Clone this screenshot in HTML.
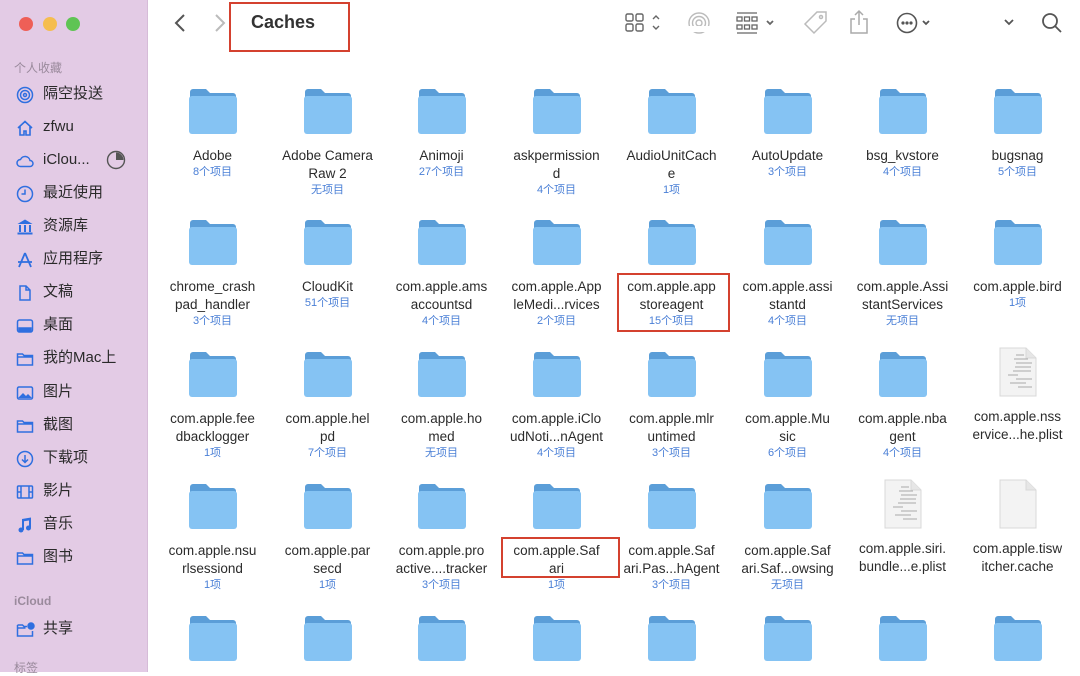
<!DOCTYPE html>
<html><head><meta charset="utf-8"><style>
*{margin:0;padding:0;box-sizing:border-box}
body{width:1080px;height:672px;overflow:hidden;background:#fff;font-family:"Liberation Sans","Noto Sans CJK SC",sans-serif;position:relative}
#sb{position:absolute;left:0;top:0;width:148px;height:672px;background:#e3cbe5;border-right:1px solid #d6bcd8}
.dot{position:absolute;top:17px;width:14px;height:14px;border-radius:50%}
.sh{position:absolute;left:14px;font-size:12px;color:#9a8a9c}
.si{position:absolute;left:16px;font-size:15px;color:#2a2a2a;height:20px;line-height:20px;white-space:nowrap}
.si svg{position:absolute;left:0;top:2px}
.si span{position:absolute;left:27px}
.c{position:absolute;width:115px;text-align:center}
.c svg{display:block;margin:0 auto}
.n{font-size:13.5px;color:#2b2b2b;line-height:18px;margin-top:12px}
.k{font-size:11px;color:#4a7fd6;line-height:15px}
.red{position:absolute;border:2px solid #d4412f}
.ti{position:absolute;color:#777}
</style></head><body>
<div id="sb">
<div class="dot" style="left:19px;background:#ee5f57"></div>
<div class="dot" style="left:43px;background:#f5bd4f"></div>
<div class="dot" style="left:66px;background:#5fc454"></div>
<div class="sh" style="top:59px">个人收藏</div>
<div class="si" style="top:84px"><svg width="18" height="18" viewBox="0 0 18 18" fill="none" stroke="#2f6fe0" stroke-width="1.5"><circle cx="9" cy="9" r="7.5"/><circle cx="9" cy="9" r="4.5"/><circle cx="9" cy="9" r="1.5"/></svg><span>隔空投送</span></div>
<div class="si" style="top:117px"><svg width="18" height="18" viewBox="0 0 18 18" fill="none" stroke="#2f6fe0" stroke-width="1.6"><path d="M2 9L9 2.5 16 9M4 7.5V16h4v-4h2v4h4V7.5"/></svg><span>zfwu</span></div>
<div class="si" style="top:150px"><svg width="18" height="18" viewBox="0 0 18 18" fill="none" stroke="#2f6fe0" stroke-width="1.5"><path d="M4.5 14.5a3.5 3.5 0 010-7 5 5 0 019.5 1 3 3 0 010 6z"/></svg><span>iClou...</span></div>
<svg style="position:absolute;left:106px;top:150px" width="20" height="20" viewBox="0 0 20 20"><circle cx="10" cy="10" r="8.5" fill="none" stroke="#555" stroke-width="1.4"/><path d="M10 10V2.5A7.5 7.5 0 0117.5 10z" fill="#555"/></svg>
<div class="si" style="top:183px"><svg width="18" height="18" viewBox="0 0 18 18" fill="none" stroke="#2f6fe0" stroke-width="1.5"><circle cx="9" cy="9" r="7.5"/><path d="M9 4.5V9H5.5"/></svg><span>最近使用</span></div>
<div class="si" style="top:216px"><svg width="18" height="18" viewBox="0 0 18 18" fill="#2f6fe0"><path d="M9 1.5L1.5 6h15z"/><rect x="3" y="7" width="2" height="7"/><rect x="8" y="7" width="2" height="7"/><rect x="13" y="7" width="2" height="7"/><rect x="1.5" y="14.5" width="15" height="2"/></svg><span>资源库</span></div>
<div class="si" style="top:249px"><svg width="18" height="18" viewBox="0 0 18 18" fill="none" stroke="#2f6fe0" stroke-width="1.8"><path d="M9 2L3 16M9 2l6 14M2 11h14"/></svg><span>应用程序</span></div>
<div class="si" style="top:282px"><svg width="18" height="18" viewBox="0 0 18 18" fill="none" stroke="#2f6fe0" stroke-width="1.5"><path d="M4 2h6l4 4v10H4zM10 2v4h4"/></svg><span>文稿</span></div>
<div class="si" style="top:315px"><svg width="18" height="18" viewBox="0 0 18 18" fill="none" stroke="#2f6fe0" stroke-width="1.5"><rect x="1.5" y="3" width="15" height="12" rx="2"/><rect x="3" y="11" width="12" height="3" fill="#2f6fe0"/></svg><span>桌面</span></div>
<div class="si" style="top:348px"><svg width="18" height="18" viewBox="0 0 18 18" fill="none" stroke="#2f6fe0" stroke-width="1.5"><path d="M1.5 4h5l1.5 1.5h8.5V15h-15zM1.5 7h15"/></svg><span>我的Mac上</span></div>
<div class="si" style="top:382px"><svg width="18" height="18" viewBox="0 0 18 18"><rect x="1.5" y="3" width="15" height="12" rx="1.5" fill="none" stroke="#2f6fe0" stroke-width="1.5"/><path d="M2 14l5-5 3 3 2-2 4 4z" fill="#2f6fe0"/></svg><span>图片</span></div>
<div class="si" style="top:415px"><svg width="18" height="18" viewBox="0 0 18 18" fill="none" stroke="#2f6fe0" stroke-width="1.5"><path d="M1.5 4h5l1.5 1.5h8.5V15h-15zM1.5 7h15"/></svg><span>截图</span></div>
<div class="si" style="top:448px"><svg width="18" height="18" viewBox="0 0 18 18" fill="none" stroke="#2f6fe0" stroke-width="1.5"><circle cx="9" cy="9" r="7.5"/><path d="M9 5v7M6 9.5l3 3 3-3"/></svg><span>下载项</span></div>
<div class="si" style="top:481px"><svg width="18" height="18" viewBox="0 0 18 18" fill="none" stroke="#2f6fe0" stroke-width="1.5"><rect x="1.5" y="3" width="15" height="12" rx="1"/><path d="M5 3v12M13 3v12M1.5 9h3.5M13 9h3.5"/></svg><span>影片</span></div>
<div class="si" style="top:514px"><svg width="18" height="18" viewBox="0 0 18 18" fill="#2f6fe0"><path d="M6 3l9-1.5v10h-2V4.5L8 5.3V14H6z"/><circle cx="5" cy="14" r="2.5"/><circle cx="12.5" cy="12" r="2.5"/></svg><span>音乐</span></div>
<div class="si" style="top:547px"><svg width="18" height="18" viewBox="0 0 18 18" fill="none" stroke="#2f6fe0" stroke-width="1.5"><path d="M1.5 4h5l1.5 1.5h8.5V15h-15zM1.5 7h15"/></svg><span>图书</span></div>
<div class="sh" style="top:594px;font-weight:bold">iCloud</div>
<div class="si" style="top:619px"><svg width="20" height="18" viewBox="0 0 20 18" fill="none" stroke="#2f6fe0" stroke-width="1.5"><path d="M1.5 4h5l1.5 1.5h3M16.5 10V15h-15V4M1.5 7h8"/><circle cx="15" cy="5" r="3" fill="#2f6fe0"/></svg><span>共享</span></div>
<div class="sh" style="top:659px">标签</div>
</div>

<svg class="ti" style="left:172px;top:12px" width="16" height="22" viewBox="0 0 16 22" fill="none" stroke="#555" stroke-width="2"><path d="M12 3L4 11l8 8"/></svg>
<svg class="ti" style="left:212px;top:12px" width="16" height="22" viewBox="0 0 16 22" fill="none" stroke="#bbb" stroke-width="2"><path d="M4 3l8 8-8 8"/></svg>
<div style="position:absolute;left:251px;top:12px;font-size:18px;font-weight:bold;color:#333">Caches</div>
<div class="red" style="left:229px;top:2px;width:121px;height:50px"></div>

<svg style="position:absolute;left:625px;top:12px" width="40" height="22" viewBox="0 0 40 22" fill="none" stroke="#666" stroke-width="1.4"><rect x="1" y="2" width="7" height="7" rx="1.5"/><rect x="11" y="2" width="7" height="7" rx="1.5"/><rect x="1" y="12" width="7" height="7" rx="1.5"/><rect x="11" y="12" width="7" height="7" rx="1.5"/><path d="M28 7l3-3 3 3M28 14l3 3 3-3"/></svg>
<svg style="position:absolute;left:687px;top:11px" width="24" height="24" viewBox="0 0 24 24" fill="none" stroke="#bbb" stroke-width="1.4"><circle cx="12" cy="12" r="10"/><circle cx="12" cy="12" r="6.5"/><circle cx="12" cy="12" r="3"/><path d="M0 18h24" stroke="#fff" stroke-width="6"/></svg>
<svg style="position:absolute;left:736px;top:11px" width="44" height="24" viewBox="0 0 44 24" fill="none" stroke="#666" stroke-width="1.3"><path d="M1 2h20M1 22h20"/><rect x="1" y="6" width="5" height="4"/><rect x="8.5" y="6" width="5" height="4"/><rect x="16" y="6" width="5" height="4"/><rect x="1" y="14" width="5" height="4"/><rect x="8.5" y="14" width="5" height="4"/><rect x="16" y="14" width="5" height="4"/><path d="M31 10l3 3 3-3" stroke-width="1.8"/></svg>
<svg style="position:absolute;left:803px;top:10px" width="26" height="26" viewBox="0 0 26 26" fill="none" stroke="#bbb" stroke-width="1.5"><path d="M14 2h9v9L11 23 2 14z"/><circle cx="18" cy="7" r="1.5"/></svg>
<svg style="position:absolute;left:849px;top:9px" width="20" height="26" viewBox="0 0 20 26" fill="none" stroke="#aaa" stroke-width="1.5"><path d="M10 2v14M6 6l4-4 4 4M6 10H2v14h16V10h-4"/></svg>
<svg style="position:absolute;left:896px;top:11px" width="44" height="24" viewBox="0 0 44 24" fill="none" stroke="#555" stroke-width="1.6"><circle cx="11" cy="12" r="9.5"/><circle cx="7" cy="12" r=".8" fill="#555"/><circle cx="11" cy="12" r=".8" fill="#555"/><circle cx="15" cy="12" r=".8" fill="#555"/><path d="M27 10l3 3 3-3" stroke-width="1.8"/></svg>
<svg style="position:absolute;left:1003px;top:17px" width="12" height="10" viewBox="0 0 12 10" fill="none" stroke="#555" stroke-width="1.8"><path d="M2 3l4 4 4-4"/></svg>
<svg style="position:absolute;left:1040px;top:11px" width="24" height="24" viewBox="0 0 24 24" fill="none" stroke="#555" stroke-width="1.8"><circle cx="10" cy="10" r="7"/><path d="M15 15l6 6"/></svg>

<svg width="0" height="0" style="position:absolute"><defs>
<symbol id="f" viewBox="0 0 50 48"><path d="M2 5a3 3 0 013-3h13l4 4h23a3 3 0 013 3v6H2z" fill="#5b9ed8"/><rect x="1" y="9" width="48" height="38" rx="3" fill="#85c3f3"/></symbol>
<symbol id="d" viewBox="0 0 40 50"><path d="M2 1h26l10 10v38H2z" fill="#f3f3f3" stroke="#d8d8d8"/><path d="M28 1v10h10" fill="#e6e6e6" stroke="#d8d8d8"/></symbol>
<symbol id="p" viewBox="0 0 40 50"><path d="M2 1h26l10 10v38H2z" fill="#f3f3f3" stroke="#d8d8d8"/><path d="M28 1v10h10" fill="#e6e6e6" stroke="#d8d8d8"/><g stroke="#aaa" stroke-width="1"><path d="M18 8h8M16 12h14M18 16h16M17 20h16M15 24h18M10 28h10M18 32h16M12 36h16M20 40h14"/></g></symbol>
</defs></svg>

<!-- row 1 -->
<div class="c" style="left:155px;top:87px"><svg width="50" height="48"><use href="#f"/></svg><div class="n">Adobe</div><div class="k">8个项目</div></div>
<div class="c" style="left:270px;top:87px"><svg width="50" height="48"><use href="#f"/></svg><div class="n">Adobe Camera<br>Raw 2</div><div class="k">无项目</div></div>
<div class="c" style="left:384px;top:87px"><svg width="50" height="48"><use href="#f"/></svg><div class="n">Animoji</div><div class="k">27个项目</div></div>
<div class="c" style="left:499px;top:87px"><svg width="50" height="48"><use href="#f"/></svg><div class="n">askpermission<br>d</div><div class="k">4个项目</div></div>
<div class="c" style="left:614px;top:87px"><svg width="50" height="48"><use href="#f"/></svg><div class="n">AudioUnitCach<br>e</div><div class="k">1项</div></div>
<div class="c" style="left:730px;top:87px"><svg width="50" height="48"><use href="#f"/></svg><div class="n">AutoUpdate</div><div class="k">3个项目</div></div>
<div class="c" style="left:845px;top:87px"><svg width="50" height="48"><use href="#f"/></svg><div class="n">bsg_kvstore</div><div class="k">4个项目</div></div>
<div class="c" style="left:960px;top:87px"><svg width="50" height="48"><use href="#f"/></svg><div class="n">bugsnag</div><div class="k">5个项目</div></div>
<!-- row 2 -->
<div class="c" style="left:155px;top:218px"><svg width="50" height="48"><use href="#f"/></svg><div class="n">chrome_crash<br>pad_handler</div><div class="k">3个项目</div></div>
<div class="c" style="left:270px;top:218px"><svg width="50" height="48"><use href="#f"/></svg><div class="n">CloudKit</div><div class="k">51个项目</div></div>
<div class="c" style="left:384px;top:218px"><svg width="50" height="48"><use href="#f"/></svg><div class="n">com.apple.ams<br>accountsd</div><div class="k">4个项目</div></div>
<div class="c" style="left:499px;top:218px"><svg width="50" height="48"><use href="#f"/></svg><div class="n">com.apple.App<br>leMedi...rvices</div><div class="k">2个项目</div></div>
<div class="c" style="left:614px;top:218px"><svg width="50" height="48"><use href="#f"/></svg><div class="n">com.apple.app<br>storeagent</div><div class="k">15个项目</div></div>
<div class="c" style="left:730px;top:218px"><svg width="50" height="48"><use href="#f"/></svg><div class="n">com.apple.assi<br>stantd</div><div class="k">4个项目</div></div>
<div class="c" style="left:845px;top:218px"><svg width="50" height="48"><use href="#f"/></svg><div class="n">com.apple.Assi<br>stantServices</div><div class="k">无项目</div></div>
<div class="c" style="left:960px;top:218px"><svg width="50" height="48"><use href="#f"/></svg><div class="n">com.apple.bird</div><div class="k">1项</div></div>
<!-- row 3 -->
<div class="c" style="left:155px;top:350px"><svg width="50" height="48"><use href="#f"/></svg><div class="n">com.apple.fee<br>dbacklogger</div><div class="k">1项</div></div>
<div class="c" style="left:270px;top:350px"><svg width="50" height="48"><use href="#f"/></svg><div class="n">com.apple.hel<br>pd</div><div class="k">7个项目</div></div>
<div class="c" style="left:384px;top:350px"><svg width="50" height="48"><use href="#f"/></svg><div class="n">com.apple.ho<br>med</div><div class="k">无项目</div></div>
<div class="c" style="left:499px;top:350px"><svg width="50" height="48"><use href="#f"/></svg><div class="n">com.apple.iClo<br>udNoti...nAgent</div><div class="k">4个项目</div></div>
<div class="c" style="left:614px;top:350px"><svg width="50" height="48"><use href="#f"/></svg><div class="n">com.apple.mlr<br>untimed</div><div class="k">3个项目</div></div>
<div class="c" style="left:730px;top:350px"><svg width="50" height="48"><use href="#f"/></svg><div class="n">com.apple.Mu<br>sic</div><div class="k">6个项目</div></div>
<div class="c" style="left:845px;top:350px"><svg width="50" height="48"><use href="#f"/></svg><div class="n">com.apple.nba<br>gent</div><div class="k">4个项目</div></div>
<div class="c" style="left:960px;top:346px"><svg width="40" height="52"><use href="#p"/></svg><div class="n" style="margin-top:10px">com.apple.nss<br>ervice...he.plist</div></div>
<!-- row 4 -->
<div class="c" style="left:155px;top:482px"><svg width="50" height="48"><use href="#f"/></svg><div class="n">com.apple.nsu<br>rlsessiond</div><div class="k">1项</div></div>
<div class="c" style="left:270px;top:482px"><svg width="50" height="48"><use href="#f"/></svg><div class="n">com.apple.par<br>secd</div><div class="k">1项</div></div>
<div class="c" style="left:384px;top:482px"><svg width="50" height="48"><use href="#f"/></svg><div class="n">com.apple.pro<br>active....tracker</div><div class="k">3个项目</div></div>
<div class="c" style="left:499px;top:482px"><svg width="50" height="48"><use href="#f"/></svg><div class="n">com.apple.Saf<br>ari</div><div class="k">1项</div></div>
<div class="c" style="left:614px;top:482px"><svg width="50" height="48"><use href="#f"/></svg><div class="n">com.apple.Saf<br>ari.Pas...hAgent</div><div class="k">3个项目</div></div>
<div class="c" style="left:730px;top:482px"><svg width="50" height="48"><use href="#f"/></svg><div class="n">com.apple.Saf<br>ari.Saf...owsing</div><div class="k">无项目</div></div>
<div class="c" style="left:845px;top:478px"><svg width="40" height="52"><use href="#p"/></svg><div class="n" style="margin-top:10px">com.apple.siri.<br>bundle...e.plist</div></div>
<div class="c" style="left:960px;top:478px"><svg width="40" height="52"><use href="#d"/></svg><div class="n" style="margin-top:10px">com.apple.tisw<br>itcher.cache</div></div>
<!-- row 5 -->
<div class="c" style="left:155px;top:614px"><svg width="50" height="48"><use href="#f"/></svg></div>
<div class="c" style="left:270px;top:614px"><svg width="50" height="48"><use href="#f"/></svg></div>
<div class="c" style="left:384px;top:614px"><svg width="50" height="48"><use href="#f"/></svg></div>
<div class="c" style="left:499px;top:614px"><svg width="50" height="48"><use href="#f"/></svg></div>
<div class="c" style="left:614px;top:614px"><svg width="50" height="48"><use href="#f"/></svg></div>
<div class="c" style="left:730px;top:614px"><svg width="50" height="48"><use href="#f"/></svg></div>
<div class="c" style="left:845px;top:614px"><svg width="50" height="48"><use href="#f"/></svg></div>
<div class="c" style="left:960px;top:614px"><svg width="50" height="48"><use href="#f"/></svg></div>

<div class="red" style="left:617px;top:273px;width:113px;height:59px"></div>
<div class="red" style="left:501px;top:537px;width:119px;height:41px"></div>
</body></html>
